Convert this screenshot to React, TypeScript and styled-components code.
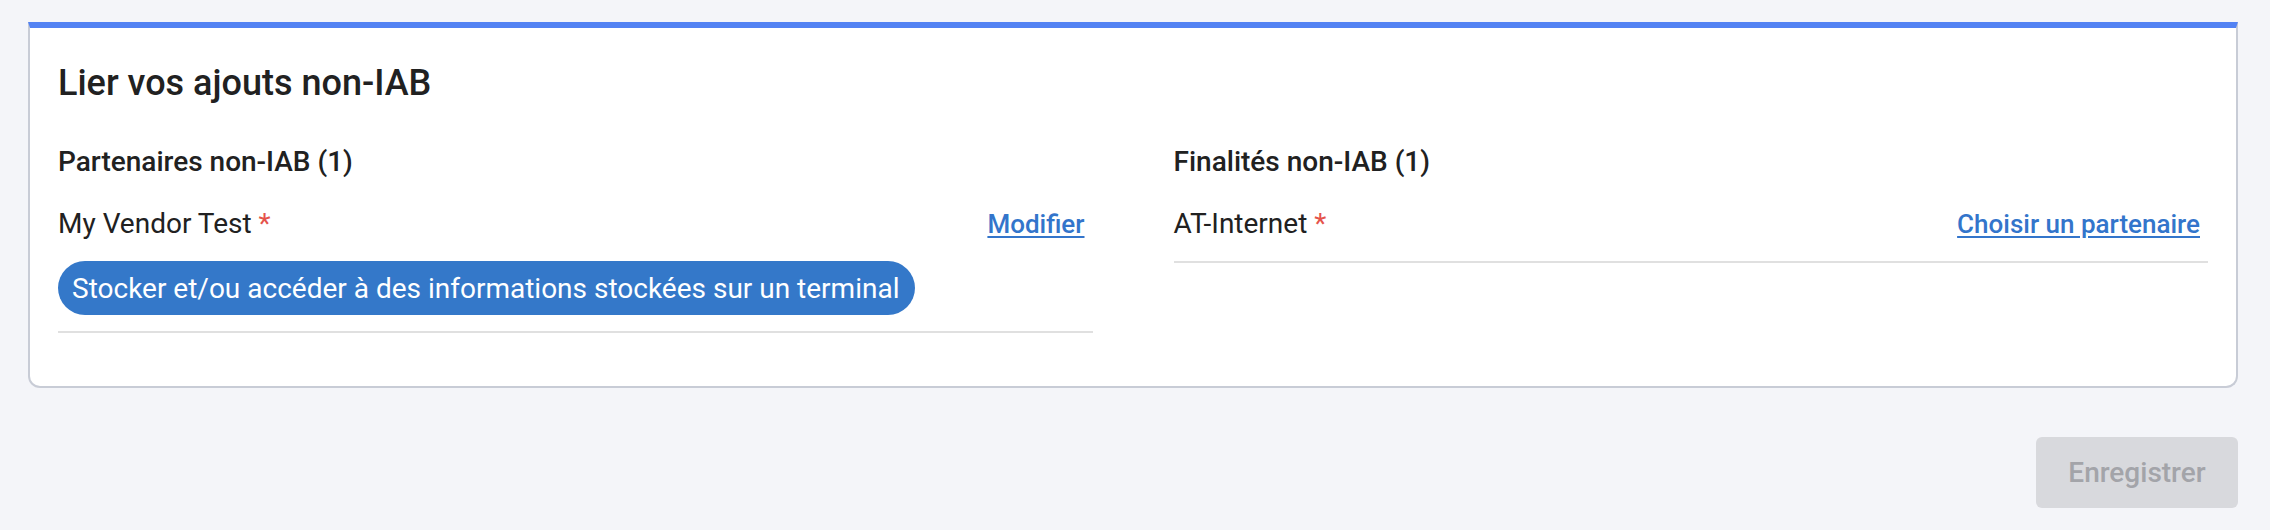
import React from 'react';
import styled, { createGlobalStyle } from 'styled-components';

interface Purpose {
	id: string;
	label: string;
}

interface LinkedItem {
	id: string;
	name: string;
	action: string;
	purposes: Purpose[];
}

interface Section {
	id: string;
	title: string;
	items: LinkedItem[];
}

const sections: Section[] = [
	{
		id: 'vendors',
		title: 'Partenaires non-IAB (1)',
		items: [
			{
				id: 'my-vendor-test',
				name: 'My Vendor Test',
				action: 'Modifier',
				purposes: [{ id: 'p1', label: 'Stocker et/ou accéder à des informations stockées sur un terminal' }],
			},
		],
	},
	{
		id: 'purposes',
		title: 'Finalités non-IAB (1)',
		items: [
			{
				id: 'at-internet',
				name: 'AT-Internet',
				action: 'Choisir un partenaire',
				purposes: [],
			},
		],
	},
];

export default function App() {
	return (
		<>
			<GlobalStyle />
			<Page>
				<Card>
					<CardTitle>Lier vos ajouts non-IAB</CardTitle>
					<Columns>
						{sections.map((section) => (
							<Column key={section.id}>
								<SectionTitle>{section.title}</SectionTitle>
								{section.items.map((item) => (
									<Item key={item.id}>
										<ItemHead>
											<ItemName>
												{item.name} <Required>*</Required>
											</ItemName>
											<ActionLink href='#'>{item.action}</ActionLink>
										</ItemHead>
										{item.purposes.length > 0 && (
											<ChipList>
												{item.purposes.map((p) => (
													<Chip key={p.id}>{p.label}</Chip>
												))}
											</ChipList>
										)}
									</Item>
								))}
							</Column>
						))}
					</Columns>
				</Card>
				<Footer>
					<SaveButton disabled>Enregistrer</SaveButton>
				</Footer>
			</Page>
		</>
	);
}

const GlobalStyle = createGlobalStyle`
	body {
		margin: 0;
		background: #f4f5f9;
		font-family: Roboto, "Liberation Sans", sans-serif;
		color: #212121;
	}
`;

const Page = styled.div`
	padding: 22px 32px 21px 28px;
`;

const Card = styled.section`
	background: #ffffff;
	border: 2px solid #c8ccd6;
	border-top: 6px solid #5282f3;
	border-radius: 0 0 12px 12px;
	padding: 35px 28px 53px 28px;
`;

const CardTitle = styled.h2`
	margin: 0;
	font-size: 36px;
	line-height: 40px;
	font-weight: 500;
	color: #212121;
`;

const Columns = styled.div`
	display: grid;
	grid-template-columns: 1fr 1fr;
	column-gap: 81px;
	margin-top: 44px;
`;

const Column = styled.div`
	display: flex;
	flex-direction: column;
`;

const SectionTitle = styled.h3`
	margin: 0 0 32px 0;
	font-size: 28px;
	line-height: 30px;
	font-weight: 500;
`;

const Item = styled.div`
	border-bottom: 2px solid #e0e0e0;
`;

const ItemHead = styled.div`
	display: flex;
	align-items: center;
	justify-content: space-between;
	margin-bottom: 22px;
	padding-right: 8px;
`;

const ItemName = styled.span`
	font-size: 28px;
	line-height: 30px;
`;

const Required = styled.span`
	color: #e5534b;
`;

const ActionLink = styled.a`
	font-size: 26px;
	line-height: 30px;
	font-weight: 500;
	color: #3375cb;
	text-decoration: underline;
	text-underline-offset: 3px;
`;

const ChipList = styled.div`
	display: flex;
	flex-wrap: wrap;
	gap: 10px;
	padding-bottom: 16px;
`;

const Chip = styled.span`
	display: inline-flex;
	align-items: center;
	height: 54px;
	padding: 0 16px 0 14px;
	border-radius: 27px;
	background: #3478c9;
	color: #ffffff;
	font-size: 28px;
`;

const Footer = styled.div`
	display: flex;
	justify-content: flex-end;
	margin-top: 49px;
`;

const SaveButton = styled.button`
	width: 202px;
	height: 71px;
	border: none;
	border-radius: 6px;
	background: #d8d9dd;
	color: #a3a4a9;
	font-family: Roboto, "Liberation Sans", sans-serif;
	font-size: 28px;
	font-weight: 500;
`;
